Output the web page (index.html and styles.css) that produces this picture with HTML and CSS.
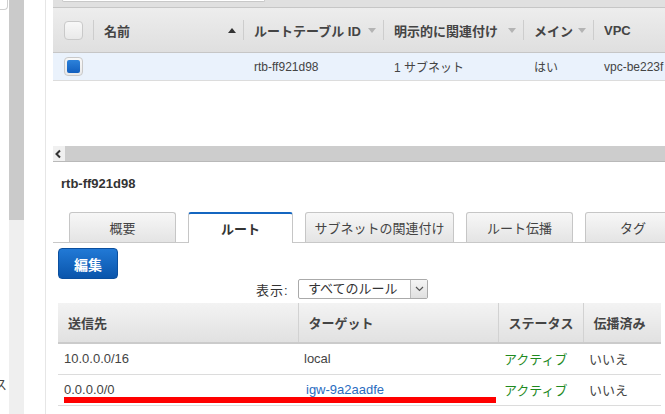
FILE: index.html
```html
<!DOCTYPE html>
<html lang="ja">
<head>
<meta charset="utf-8">
<title>ルートテーブル</title>
<link rel="stylesheet" href="styles.css">
</head>
<body>
<div class="page">
  <aside class="side">
    <div class="side-box"></div>
    <div class="side-text">ス</div>
  </aside>
  <div class="vscroll"><div class="vthumb"></div></div>
  <div class="gutter"></div>
  <main class="main">
    <div class="topbar"><div class="search"></div></div>
    <div class="grid">
      <div class="grid-head">
        <div class="hc hc-check"><span class="cb"></span></div>
        <div class="hc"><span class="hc-text">名前</span><span class="arrow-up"></span></div>
        <div class="hc"><span class="hc-text">ルートテーブル ID</span><span class="arrow-down"></span></div>
        <div class="hc"><span class="hc-text">明示的に関連付け</span><span class="arrow-down"></span></div>
        <div class="hc"><span class="hc-text">メイン</span><span class="arrow-down"></span></div>
        <div class="hc"><span class="hc-text">VPC</span></div>
      </div>
      <div class="grid-row selected">
        <div class="rc rc-check"><span class="cb checked"><span class="cb-mark"></span></span></div>
        <div class="rc"></div>
        <div class="rc">rtb-ff921d98</div>
        <div class="rc">1 サブネット</div>
        <div class="rc">はい</div>
        <div class="rc">vpc-be223f</div>
      </div>
    </div>
    <div class="spacer"></div>
    <div class="hscroll">
      <span class="harrow"><svg width="8" height="10" viewBox="0 0 8 10"><polyline points="6,1.5 2.5,5 6,8.5" fill="none" stroke="#333" stroke-width="2"/></svg></span>
      <span class="hthumb"></span>
    </div>
    <section class="detail">
      <h2 class="title">rtb-ff921d98</h2>
      <div class="tabs">
        <div class="tab w1">概要</div>
        <div class="tab w2 active">ルート</div>
        <div class="tab w3">サブネットの関連付け</div>
        <div class="tab w4">ルート伝播</div>
        <div class="tab w5">タグ</div>
      </div>
      <div class="pane">
        <button class="btn">編集</button>
        <div class="filter">
          <span class="filter-label">表示:</span>
          <div class="select">
            <span class="select-text">すべてのルール</span>
            <span class="select-btn"><svg width="9" height="6" viewBox="0 0 9 6"><polyline points="1,1 4.5,4.5 8,1" fill="none" stroke="#555" stroke-width="1.2"/></svg></span>
          </div>
        </div>
        <div class="routes-wrap">
          <table class="routes">
            <colgroup><col class="c1"><col class="c2"><col class="c3"><col class="c4"></colgroup>
            <thead>
              <tr><th>送信先</th><th>ターゲット</th><th>ステータス</th><th>伝播済み</th></tr>
            </thead>
            <tbody>
              <tr><td>10.0.0.0/16</td><td>local</td><td class="ok">アクティブ</td><td>いいえ</td></tr>
              <tr><td>0.0.0.0/0</td><td><span class="link">igw-9a2aadfe</span></td><td class="ok">アクティブ</td><td>いいえ</td></tr>
            </tbody>
          </table>
          <div class="redline"></div>
        </div>
      </div>
    </section>
  </main>
</div>
</body>
</html>
```
FILE: styles.css
```css
* { box-sizing: border-box; margin: 0; padding: 0; }
html, body { width: 665px; height: 414px; overflow: hidden; background: #fff; }
body {
  font-family: "Liberation Sans", "Noto Sans CJK JP", sans-serif;
  font-size: 12px;
  color: #444;
}
.page { display: flex; height: 414px; }

.side {
  width: 9px;
  overflow: hidden;
  display: flex;
  flex-direction: column;
  justify-content: space-between;
}
.side-box {
  width: 8px;
  height: 10px;
  border: 1px solid #cfcfcf;
  border-top: 0;
  border-left: 0;
  border-radius: 0 0 4px 0;
}
.side-text { margin-left: -6px; font-size: 13px; line-height: 19px; margin-bottom: 20px; color: #444; }

.vscroll { width: 15px; background: #efefef; }
.vthumb { height: 220px; background: #cacaca; }
.gutter { width: 22px; border-right: 1px solid #e6e6e6; }

.main {
  flex: 1;
  min-width: 0;
  margin-left: 7px;
  overflow: hidden;
  display: flex;
  flex-direction: column;
}

.topbar {
  height: 8px;
  background: #e0e0e0;
  border-bottom: 1px solid #c6c6c6;
  padding-left: 9px;
}
.search {
  width: 203px;
  height: 2px;
  background: #fff;
  border: 1px solid #c8c8c8;
  border-top: 0;
  border-radius: 0 0 3px 3px;
}

.grid { width: 700px; }
.grid-head, .grid-row {
  display: grid;
  grid-template-columns: 40px 150px 140px 140px 70px 160px;
  align-items: center;
}
.grid-head {
  height: 45px;
  background: linear-gradient(#ededed, #dfdfdf);
  border-bottom: 1px solid #c6c6c6;
}
.hc {
  height: 20px;
  border-left: 1px solid #cdcdcd;
  padding: 0 7px 0 10px;
  display: flex;
  align-items: center;
  justify-content: space-between;
  gap: 4px;
  font-size: 13px;
  font-weight: bold;
  color: #444;
  white-space: nowrap;
  overflow: hidden;
}
.hc-text { overflow: hidden; }
.hc-check { border-left: 0; padding-left: 11px; height: 19px; }
.arrow-up {
  flex: none;
  width: 0; height: 0;
  border-left: 4px solid transparent;
  border-right: 4px solid transparent;
  border-bottom: 5px solid #333;
}
.arrow-down {
  flex: none;
  width: 0; height: 0;
  border-left: 4px solid transparent;
  border-right: 4px solid transparent;
  border-top: 5px solid #b4b4b4;
}

.grid-row {
  height: 28px;
  border-bottom: 1px solid #dcdcdc;
}
.grid-row.selected { background: #eaf2fc; }
.rc { padding-left: 11px; font-size: 12px; color: #444; white-space: nowrap; overflow: hidden; }
.rc-check { display: flex; }

.cb {
  width: 19px;
  height: 19px;
  border: 1px solid #c9c9c9;
  border-radius: 4px;
  background: linear-gradient(#f8f8f8, #e9e9e9);
  display: flex;
  align-items: center;
  justify-content: center;
}
.cb-mark {
  width: 13px;
  height: 13px;
  border-radius: 2px;
  background: linear-gradient(#2d82da, #125fbf);
}

.spacer { height: 65px; flex: none; }

.hscroll {
  height: 16px;
  margin-left: -2px;
  display: flex;
  background: #cdcdcd;
  border-bottom: 1px solid #b9b9b9;
  flex: none;
}
.harrow {
  width: 14px;
  background: #f0f0f0;
  display: flex;
  align-items: center;
  justify-content: center;
}
.hthumb { flex: 1; }

.title {
  padding: 14px 0 0 8px;
  font-size: 13px;
  line-height: 16px;
  font-weight: bold;
  color: #333;
  margin-bottom: 20px;
}

.tabs {
  display: flex;
  align-items: flex-end;
  gap: 12px;
  padding-left: 16px;
  height: 31px;
  border-bottom: 1px solid #c8c8c8;
}
.tab {
  flex: none;
  height: 30px;
  border: 1px solid #c6c6c6;
  border-bottom: 0;
  border-radius: 3px 3px 0 0;
  background: linear-gradient(#f7f7f7, #e4e4e4);
  display: flex;
  align-items: center;
  justify-content: center;
  font-size: 13px;
  color: #444;
}
.tab.active {
  height: 31px;
  margin-bottom: -1px;
  background: #fff;
  border-top: 2px solid #1466c0;
  font-weight: bold;
  color: #333;
}
.w1 { width: 107px; }
.w2 { width: 105px; }
.w3 { width: 149px; }
.w4 { width: 107px; }
.w5 { width: 96px; }

.pane { padding-left: 5px; }
.btn {
  display: block;
  margin-top: 5px;
  width: 60px;
  height: 31px;
  border: 1px solid #0b4f9e;
  border-radius: 4px;
  background: linear-gradient(#2179d6, #0a55ab);
  color: #fff;
  font: bold 14px "Liberation Sans", "Noto Sans CJK JP", sans-serif;
}

.filter {
  display: flex;
  align-items: center;
  gap: 7px;
  height: 20px;
  margin-left: 198px;
}
.filter-label { width: 35px; font-size: 13px; color: #333; letter-spacing: 1px; }
.select {
  width: 130px;
  height: 20px;
  border: 1px solid #aaa;
  border-radius: 2px;
  display: flex;
  font-size: 13px;
  color: #333;
}
.select-text { flex: 1; padding-left: 9px; line-height: 18px; }
.select-btn {
  width: 17px;
  border-left: 1px solid #bbb;
  background: linear-gradient(#f5f5f5, #e0e0e0);
  display: flex;
  align-items: center;
  justify-content: center;
}

.routes-wrap { position: relative; margin-top: 4px; width: 603px; }
.routes {
  width: 603px;
  border-collapse: collapse;
  table-layout: fixed;
}
.c1 { width: 240px; }
.c2 { width: 200px; }
.c3 { width: 85px; }
.c4 { width: 78px; }
.routes th {
  height: 40px;
  background: linear-gradient(#f3f3f3, #e1e1e1);
  border-bottom: 2px solid #cbcbcb;
  border-left: 1px solid #d2d2d2;
  text-align: left;
  padding-left: 10px;
  font-size: 13px;
  font-weight: bold;
  color: #444;
  white-space: nowrap;
}
.routes th:first-child { border-left: 0; }
.routes td {
  height: 31px;
  border-bottom: 1px solid #dcdcdc;
  padding-left: 6px;
  font-size: 13px;
  color: #444;
  white-space: nowrap;
}
.routes td.ok { color: #1f8a1f; }
.link { color: #2a6cbf; margin-left: 2px; }

.redline {
  position: absolute;
  left: 6px;
  top: 94px;
  width: 432px;
  height: 6px;
  background: #ff0000;
}
```
